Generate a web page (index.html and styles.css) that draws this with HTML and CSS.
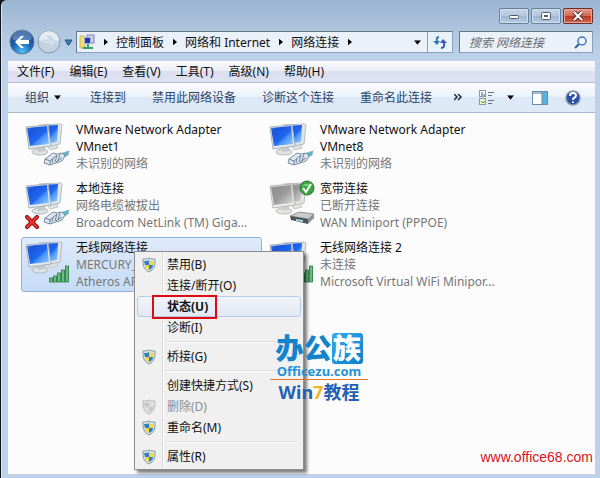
FILE: index.html
```html
<!DOCTYPE html>
<html lang="zh-CN">
<head>
  <meta charset="UTF-8">
  <title>网络连接</title>
  <link rel="stylesheet" href="styles.css">
</head>
<body>

  <svg class="sprite" aria-hidden="true">
    <defs>
      <linearGradient id="screenBlue" x1="0" y1="0" x2="1" y2="1">
        <stop offset="0" stop-color="#3f86f4"/>
        <stop offset="0.2" stop-color="#1c55dc"/>
        <stop offset="0.55" stop-color="#1f66ee"/>
        <stop offset="0.65" stop-color="#4a94fa"/>
        <stop offset="1" stop-color="#9ad0ff"/>
      </linearGradient>
      <linearGradient id="screenGray" x1="0" y1="0" x2="1" y2="1">
        <stop offset="0" stop-color="#8d8d8d"/>
        <stop offset="0.5" stop-color="#999"/>
        <stop offset="1" stop-color="#dcdcdc"/>
      </linearGradient>
      <linearGradient id="barGreen" x1="0" y1="0" x2="1" y2="0">
        <stop offset="0" stop-color="#2c8c4c"/>
        <stop offset="0.5" stop-color="#8fd49c"/>
        <stop offset="1" stop-color="#2a8446"/>
      </linearGradient>
      <radialGradient id="backBlue" cx="0.5" cy="0.9" r="0.9">
        <stop offset="0" stop-color="#4ec3f4"/>
        <stop offset="0.45" stop-color="#1f66b8"/>
        <stop offset="1" stop-color="#173f86"/>
      </radialGradient>

      <symbol id="pcBlue" viewBox="0 0 46 46">
        <path d="M21 23l10-1 2 5-8 2z" fill="#dfe2e3" stroke="#c2c7ca"/>
        <path d="M14 4l21-1 2 1-2 19-10 2z" fill="#dfe5e8" stroke="#b4bdc2"/>
        <path d="M16 5l17-1-1 17-7 1z" fill="url(#screenBlue)"/>
        <ellipse cx="15" cy="31" rx="8" ry="3" fill="#dfe2e3" stroke="#b4babd"/>
        <path d="M12 26l8-1 1 5-8 1z" fill="#c4cacd"/>
        <path d="M1 6l22-2 3 21-22 3z" fill="#e6eaec" stroke="#a9b3b8"/>
        <path d="M2 7l20-2 2 18-19 2z" fill="url(#screenBlue)"/>
      </symbol>
      <symbol id="pcGray" viewBox="0 0 46 46">
        <path d="M21 23l10-1 2 5-8 2z" fill="#e4e4e2" stroke="#c8c8c6"/>
        <path d="M14 4l21-1 2 1-2 19-10 2z" fill="#e6e6e4" stroke="#bcbcb8"/>
        <path d="M16 5l17-1-1 17-7 1z" fill="url(#screenGray)"/>
        <ellipse cx="15" cy="31" rx="8" ry="3" fill="#e4e4e2" stroke="#bebebc"/>
        <path d="M12 26l8-1 1 5-8 1z" fill="#cfcfcd"/>
        <path d="M1 6l22-2 3 21-22 3z" fill="#ededeb" stroke="#b8b8b4"/>
        <path d="M2 7l20-2 2 18-19 2z" fill="url(#screenGray)"/>
      </symbol>
      <symbol id="plug" viewBox="0 0 46 46">
        <path d="M32 34l12-4-1 4-7 4z" fill="#58b4c8" stroke="#8fb9c6"/>
        <path d="M20 38l8-6 4 1 5-1 3 3-3 5-12 4-6-2z" fill="#dce5ec" stroke="#7b8fa5"/>
        <path d="M20 38l5 2 7-6M25 40v4M28 37l-1 5M32 34l-2 7M35 33l-2 7M37 37l-6 4" fill="none" stroke="#70869f"/>
      </symbol>
      <symbol id="signal" viewBox="0 0 46 46">
        <g fill="url(#barGreen)" stroke="#257d41" stroke-width="0.8">
          <rect x="24.500" y="39" width="3" height="4"/>
          <rect x="28.500" y="37" width="3" height="6"/>
          <rect x="32.500" y="34" width="3" height="9"/>
          <rect x="36.500" y="31" width="3" height="12"/>
          <rect x="40.500" y="27" width="3" height="16"/>
        </g>
      </symbol>
      <symbol id="modem" viewBox="0 0 46 46">
        <path d="M21 36l9-4 15 2-6 5z" fill="#c8cccd" stroke="#8f9698"/>
        <path d="M21 36l18 3v5l-17-4z" fill="#4e5557"/>
        <path d="M39 39l6-5v4l-6 6z" fill="#8b9294"/>
        <path d="M27 39l7 1v2l-7-1z" fill="#a6d4e0"/>
      </symbol>
      <symbol id="cross" viewBox="0 0 14 14">
        <path d="M2 2l10 10M12 2L2 12" stroke="#8e1010" stroke-width="4" stroke-linecap="round"/>
        <path d="M2 2l10 10M12 2L2 12" stroke="#ee3330" stroke-width="2" stroke-linecap="round"/>
      </symbol>
      <symbol id="tick" viewBox="0 0 16 16">
        <circle cx="8" cy="8" r="7" fill="#3ba63e" stroke="#2d7031"/>
        <path d="M3 6a6 5 0 0 1 10 0z" fill="#7ed07c"/>
        <path d="M4 8l3 4 5-8" fill="none" stroke="#fff" stroke-width="2"/>
      </symbol>
      <symbol id="shield" viewBox="0 0 14 16">
        <path d="M7 1c2 1 4 1 6 1 0 6 0 10-6 13C1 12 1 8 1 2c2 0 4 0 6-1z" fill="#d8e4e8" stroke="#8199a3"/>
        <path d="M7 3v5H3L2 4c2 0 4 0 5-1z" fill="#2e7fc0"/>
        <path d="M7 3v5h4l1-4c-2 0-4 0-5-1z" fill="#f0d64a"/>
        <path d="M7 8v5C4 12 3 10 3 8z" fill="#f0d64a"/>
        <path d="M7 8v5c3-1 4-3 4-5z" fill="#2e7fc0"/>
      </symbol>
      <symbol id="shieldOff" viewBox="0 0 14 16">
        <path d="M7 1c2 1 4 1 6 1 0 6 0 10-6 13C1 12 1 8 1 2c2 0 4 0 6-1z" fill="#dedede" stroke="#bcbcbc"/>
        <path d="M7 3v5H3L2 4c2 0 4 0 5-1zM7 8v5c3-1 4-3 4-5z" fill="#c6c6c6"/>
      </symbol>
      <symbol id="arrowRight" viewBox="0 0 5 8">
        <path d="M0 0l5 4-5 4z"/>
      </symbol>
      <symbol id="arrowDown" viewBox="0 0 8 5">
        <path d="M0 0h8L4 5z"/>
      </symbol>
    </defs>
  </svg>

  <div class="window">
    <header class="titlebar">
      <button class="win-btn" aria-label="最小化">
        <svg width="12" height="10" viewBox="0 0 12 10"><rect x="1.500" y="4.500" width="9" height="3" rx="1" fill="#fff" stroke="#4d5b6b"/></svg>
      </button>
      <button class="win-btn" aria-label="最大化">
        <svg width="12" height="10" viewBox="0 0 12 10"><rect x="1.500" y="1.500" width="9" height="7" rx="1" fill="#fff" stroke="#4d5b6b"/><rect x="4.500" y="4.500" width="3" height="1" fill="#8fa5bb" stroke="#4d5b6b"/></svg>
      </button>
      <button class="win-btn close" aria-label="关闭">
        <svg width="12" height="10" viewBox="0 0 12 10"><path d="M2 1l8 8M10 1L2 9" stroke="#5b3434" stroke-width="4"/><path d="M2 1l8 8M10 1L2 9" stroke="#fff" stroke-width="2"/></svg>
      </button>
    </header>

    <nav class="navbar">
      <div class="history">
        <button aria-label="后退">
          <svg width="26" height="26" viewBox="0 0 26 26"><circle cx="13" cy="13" r="12" fill="url(#backBlue)" stroke="#5b7897"/><path d="M3 10a10 9 0 0 1 20 0q-10 5-20 0z" fill="#fff" opacity="0.25"/><path d="M6 13l6-6h3l-4 4h9v4h-9l4 4h-3z" fill="#fff"/></svg>
        </button>
        <button aria-label="前进">
          <svg width="26" height="26" viewBox="0 0 26 26"><circle cx="13" cy="13" r="11" fill="#c3d1e0" stroke="#8499b1"/><path d="M3 11a10 9 0 0 1 20 0q-10 6-20 0z" fill="#e3ebf3"/><path d="M20 13l-6-6h-3l4 4H7v4h8l-4 4h3z" fill="#d3dfea" stroke="#c0cedc"/></svg>
        </button>
        <button class="recent" aria-label="最近的页面">
          <svg width="9" height="7" viewBox="0 0 9 7"><path d="M1 1h7L5 6H4z" fill="#3c7ba8" stroke="#255a85"/></svg>
        </button>
      </div>

      <div class="address">
        <svg class="place" width="16" height="17" viewBox="0 0 16 17"><path d="M1 2h4l1 1v11H1z" fill="#f2df7c" stroke="#d1b850"/><rect x="8" y="1" width="7" height="8" fill="#c8d0ee" stroke="#7b86b5"/><rect x="5.500" y="3.500" width="6" height="6" fill="#2338a8" stroke="#aab4dc"/><path d="M9 10v4M4 14h10" stroke="#35a06b" stroke-width="2"/></svg>
        <svg class="sep" width="4" height="8"><use href="#arrowRight"/></svg>
        <a href="#">控制面板</a>
        <svg class="sep" width="4" height="8"><use href="#arrowRight"/></svg>
        <a href="#">网络和 Internet</a>
        <svg class="sep" width="4" height="8"><use href="#arrowRight"/></svg>
        <a href="#">网络连接</a>
        <svg class="sep" width="4" height="8"><use href="#arrowRight"/></svg>
        <button class="drop" aria-label="以前的位置"><svg width="7" height="5" viewBox="0 0 8 5"><use href="#arrowDown"/></svg></button>
        <button class="refresh" aria-label="刷新">
          <svg width="14" height="14" viewBox="0 0 14 14"><path d="M6 2Q3 2 4 6" fill="none" stroke="#2b78b8" stroke-width="2"/><path d="M0 6h7l-3 4z" fill="#2b78b8"/><path d="M8 13q4 0 3-5" fill="none" stroke="#3558b0" stroke-width="2"/><path d="M7 8h7l-4-4z" fill="#3558b0"/></svg>
        </button>
      </div>

      <div class="search">
        <input type="text" placeholder="搜索 网络连接" aria-label="搜索 网络连接">
        <svg width="13" height="13" viewBox="0 0 13 13"><circle cx="8" cy="5" r="4" fill="#eef6fd" stroke="#3d78b4" stroke-width="1.500"/><path d="M5 8l-4 4" stroke="#2c5f9c" stroke-width="2"/></svg>
      </div>
    </nav>

    <main class="client">
      <div class="menubar">
        <button>文件(F)</button>
        <button>编辑(E)</button>
        <button>查看(V)</button>
        <button>工具(T)</button>
        <button>高级(N)</button>
        <button>帮助(H)</button>
      </div>

      <div class="toolbar">
        <button class="organize">组织 <svg width="7" height="5" viewBox="0 0 8 5"><use href="#arrowDown"/></svg></button>
        <button>连接到</button>
        <button>禁用此网络设备</button>
        <button>诊断这个连接</button>
        <button>重命名此连接</button>
        <div class="tools">
          <button aria-label="更多"><svg width="8" height="7" viewBox="0 0 8 7"><path d="M0 0l3 3-3 3M4 0l3 3-3 3" fill="none" stroke="#1e2b45" stroke-width="1.500"/></svg></button>
          <button class="views" aria-label="更改您的视图">
            <svg width="16" height="15" viewBox="0 0 16 15"><rect x="0.500" y="0.500" width="6" height="6" fill="#fff" stroke="#8a97a8"/><rect x="0.500" y="8.500" width="6" height="6" fill="#e9f1cf" stroke="#8a97a8"/><path d="M2 5h4M2 3h2" stroke="#3a5f90"/><path d="M2 11l2 2 2-2" fill="none" stroke="#6f8c30"/><path d="M9 2.500h6M9 5.500h4M9 10.500h6M9 13.500h4" stroke="#67748a"/></svg>
            <svg width="7" height="5" viewBox="0 0 8 5"><use href="#arrowDown"/></svg>
          </button>
          <button aria-label="显示预览窗格">
            <svg width="16" height="14" viewBox="0 0 16 14"><rect x="0.500" y="0.500" width="15" height="13" fill="#fdfdfd" stroke="#6d8aa6"/><path d="M1 2h9" stroke="#a8b8c8" stroke-width="2"/><rect x="10" y="1" width="5" height="12" fill="#56b3e2"/><path d="M10 1v12" stroke="#6d8aa6"/></svg>
          </button>
          <button aria-label="帮助">
            <svg width="16" height="16" viewBox="0 0 16 16"><circle cx="8" cy="8" r="7" fill="#2a4fa8" stroke="#8796b3" stroke-width="1.500"/><path d="M5 6q0-3 3-3t3 2.500q0 1.500-2 2.500-1 .5-1 2M8 11.500v1.500" fill="none" stroke="#fff" stroke-width="2"/></svg>
          </button>
        </div>
      </div>

      <div class="connections">
        <button class="conn">
          <span class="icon"><svg width="46" height="46"><use href="#pcBlue"/><use href="#plug"/></svg></span>
          <span class="info"><span class="name">VMware Network Adapter VMnet1</span><span>未识别的网络</span></span>
        </button>
        <button class="conn">
          <span class="icon"><svg width="46" height="46"><use href="#pcBlue"/><use href="#plug"/></svg></span>
          <span class="info"><span class="name">VMware Network Adapter VMnet8</span><span>未识别的网络</span></span>
        </button>
        <button class="conn">
          <span class="icon"><svg width="46" height="46"><use href="#pcBlue"/><use href="#plug"/></svg><svg class="badge-off" width="14" height="14"><use href="#cross"/></svg></span>
          <span class="info"><span class="name">本地连接</span><span>网络电缆被拔出</span><span>Broadcom NetLink (TM) Giga...</span></span>
        </button>
        <button class="conn">
          <span class="icon"><svg width="46" height="46"><use href="#pcGray"/><use href="#modem"/></svg><svg class="badge-ok" width="16" height="16"><use href="#tick"/></svg></span>
          <span class="info"><span class="name">宽带连接</span><span>已断开连接</span><span>WAN Miniport (PPPOE)</span></span>
        </button>
        <button class="conn selected">
          <span class="icon"><svg width="46" height="46"><use href="#pcBlue"/><use href="#signal"/></svg></span>
          <span class="info"><span class="name">无线网络连接</span><span>MERCURY_</span><span>Atheros AR</span></span>
        </button>
        <button class="conn">
          <span class="icon"><svg width="46" height="46"><use href="#pcBlue"/><use href="#signal"/></svg></span>
          <span class="info"><span class="name">无线网络连接 2</span><span>未连接</span><span>Microsoft Virtual WiFi Minipor...</span></span>
        </button>
      </div>

      <a class="site" href="#">www.office68.com</a>
    </main>
  </div>

  <div class="context-menu">
    <button><svg width="14" height="16"><use href="#shield"/></svg><span>禁用(B)</span></button>
    <button><span>连接/断开(O)</span></button>
    <button class="active"><span>状态(U)</span></button>
    <button><span>诊断(I)</span></button>
    <hr>
    <button><svg width="14" height="16"><use href="#shield"/></svg><span>桥接(G)</span></button>
    <hr>
    <button><span>创建快捷方式(S)</span></button>
    <button disabled><svg width="14" height="16"><use href="#shieldOff"/></svg><span>删除(D)</span></button>
    <button><svg width="14" height="16"><use href="#shield"/></svg><span>重命名(M)</span></button>
    <hr>
    <button><svg width="14" height="16"><use href="#shield"/></svg><span>属性(R)</span></button>
    <div class="marker"></div>
  </div>

  <div class="watermark">
    <div class="brand">办公<span>族</span></div>
    <div class="domain">Officezu.com</div>
    <div class="topic">Win<span>7</span>教程</div>
  </div>

</body>
</html>
```
FILE: styles.css
```css
* {
  box-sizing: border-box;
}

body {
  margin: 0;
  background: #10141c;
  color: #111;
  font-family: "Noto Sans", "Noto Sans CJK SC", sans-serif;
  font-size: 12px;
  line-height: 17px;
}

button {
  display: flex;
  align-items: center;
  margin: 0;
  padding: 0;
  border: none;
  background: none;
  color: inherit;
  font: inherit;
  text-align: left;
  white-space: nowrap;
}

svg {
  display: block;
  flex: none;
}

.sprite {
  position: absolute;
  width: 0;
  height: 0;
}

.window {
  display: flex;
  flex-direction: column;
  min-height: 100vh;
  margin-left: 1px;
  padding: 0 5px 4px 6px;
  border-left: 1px solid #d5e4f3;
  border-top-left-radius: 6px;
  background: linear-gradient(#9bb5d0, #b4cae2 40px, #bdd2ea 60px);
}

/* title bar */
.titlebar {
  display: flex;
  justify-content: flex-end;
  gap: 2px;
  height: 31px;
  padding: 8px 2px 0 0;
}

.win-btn {
  justify-content: center;
  width: 30px;
  height: 16px;
  border: 1px solid #66809c;
  border-radius: 2px;
  background: linear-gradient(#c6d6e8, #b2c6dc 50%, #9cb5d0 50%, #b8cde3);
  box-shadow: inset 0 0 0 1px #d2dfed;
}

.win-btn.close {
  border-color: #6b2b28;
  background: linear-gradient(#e2998b, #d2664f 50%, #bb3521 50%, #d26748);
  box-shadow: inset 0 0 0 1px #e8a99c;
}

/* navigation */
.navbar {
  display: flex;
  align-items: center;
  gap: 6px;
  height: 22px;
  padding-right: 2px;
}

.history {
  display: flex;
  align-items: center;
  gap: 1px;
  width: 62px;
  padding-left: 1px;
}

.history .recent {
  padding-left: 1px;
}

.address,
.search {
  display: flex;
  align-items: center;
  height: 22px;
  border: 1px solid;
  border-color: #66788d #8ba0b9 #8ba0b9 #66788d;
  background: #ebf1f9;
}

.address {
  flex: 1;
  padding-left: 2px;
}

.address a {
  color: #111;
  text-decoration: none;
}

.sep {
  margin: 0 8px 0 9px;
}

.drop {
  margin-left: auto;
  padding: 0 6px;
}

.refresh {
  justify-content: center;
  height: 20px;
  width: 25px;
  border-left: 1px solid #8ba0b9;
}

.search {
  width: 134px;
  padding: 0 5px 0 9px;
}

.search input {
  flex: 1;
  min-width: 0;
  padding: 0;
  border: none;
  outline: none;
  background: none;
  font: inherit;
  font-style: italic;
}

.search input::placeholder {
  color: #6a6f76;
}

/* client area */
.client {
  display: flex;
  flex: 1;
  flex-direction: column;
  margin-top: 8px;
  background: #fcfcfc;
}

.menubar {
  display: flex;
  gap: 15px;
  height: 22px;
  padding: 0 9px;
  border-bottom: 1px solid #b5bfd3;
  background: linear-gradient(#fafbfe, #eceef8 45%, #dcdff0 50%, #dee1f2);
}

.toolbar {
  display: flex;
  align-items: center;
  gap: 26px;
  height: 30px;
  padding: 0 14px 0 17px;
  border-bottom: 1px solid #a9b9d2;
  background: linear-gradient(#fafcff, #ebf2fb 50%, #dde8f6 50%, #dfeaf7);
  color: #2b4468;
}

.organize {
  gap: 5px;
  padding-right: 3px;
}

.tools {
  display: flex;
  flex: 1;
  align-items: center;
  justify-content: space-between;
  margin-left: -4px;
  color: #1e2b45;
}

.views {
  gap: 12px;
}

.connections {
  display: grid;
  grid-template-columns: 241px 241px;
  gap: 4px 3px;
  padding: 6px 13px;
}

.conn {
  align-items: flex-start;
  height: 55px;
  padding: 1px 3px;
  border: 1px solid transparent;
  border-radius: 3px;
  color: #777;
}

.conn.selected {
  border-color: #8fb3d9;
  background: linear-gradient(#dfeafa, #c5dbf5);
}

.icon {
  position: relative;
  flex: none;
  width: 51px;
}

.badge-off {
  position: absolute;
  left: 0;
  bottom: -3px;
}

.badge-ok {
  position: absolute;
  top: 0;
  left: 30px;
}

.info {
  display: flex;
  flex: 1;
  flex-direction: column;
}

.name {
  color: #111;
  white-space: normal;
}

.site {
  margin-top: auto;
  padding: 0 2px 8px;
  color: #d9131e;
  font: 14px/17px "Liberation Sans", Arial, sans-serif;
  text-align: right;
  text-decoration: none;
}

/* context menu */
.context-menu {
  position: absolute;
  top: 251px;
  left: 134px;
  width: 170px;
  padding: 2px;
  border: 1px solid #8e8e8e;
  background: linear-gradient(90deg, #f0f0f0 27px, #dcdcdc 27px, #dcdcdc 28px, #fff 28px, #fff 29px, #f0f0f0 29px);
  box-shadow: 3px 3px 3px rgba(0, 0, 0, 0.5);
}

.context-menu button {
  display: grid;
  grid-template-columns: 25px 1fr;
  width: 100%;
  height: 21px;
  padding-left: 4px;
  border: 1px solid transparent;
  border-radius: 3px;
}

.context-menu button span {
  grid-column: 2;
}

.context-menu .active {
  border-color: #b3cce8;
  background: linear-gradient(#f1f4f9, #e2e9f4);
  font-weight: bold;
}

.context-menu button:disabled {
  color: #8c8c8c;
}

.context-menu hr {
  height: 2px;
  margin: 3px 3px 3px 28px;
  border: none;
  border-top: 1px solid #dcdcdc;
  background: #fff;
}

.marker {
  position: absolute;
  top: 43px;
  left: 17px;
  width: 65px;
  height: 24px;
  border: 2px solid #e00b12;
}

/* watermark over the page */
.watermark {
  position: absolute;
  top: 333px;
  left: 270px;
  width: 98px;
  font-weight: bold;
  text-align: center;
}

.brand {
  display: flex;
  justify-content: center;
  color: #1583cb;
  font-size: 28px;
  font-weight: 900;
  line-height: 31px;
}

.brand span {
  width: 31px;
  border-radius: 3px;
  background: linear-gradient(135deg, #36a9ec, #0c7fce);
  color: #fff;
}

.domain {
  border-bottom: 1px solid #e2762a;
  color: #1f93d8;
  font-size: 13px;
  line-height: 15px;
}

.topic {
  color: #2560b4;
  font-size: 18px;
  line-height: 25px;
}

.topic span {
  color: #f3b51f;
}
```
